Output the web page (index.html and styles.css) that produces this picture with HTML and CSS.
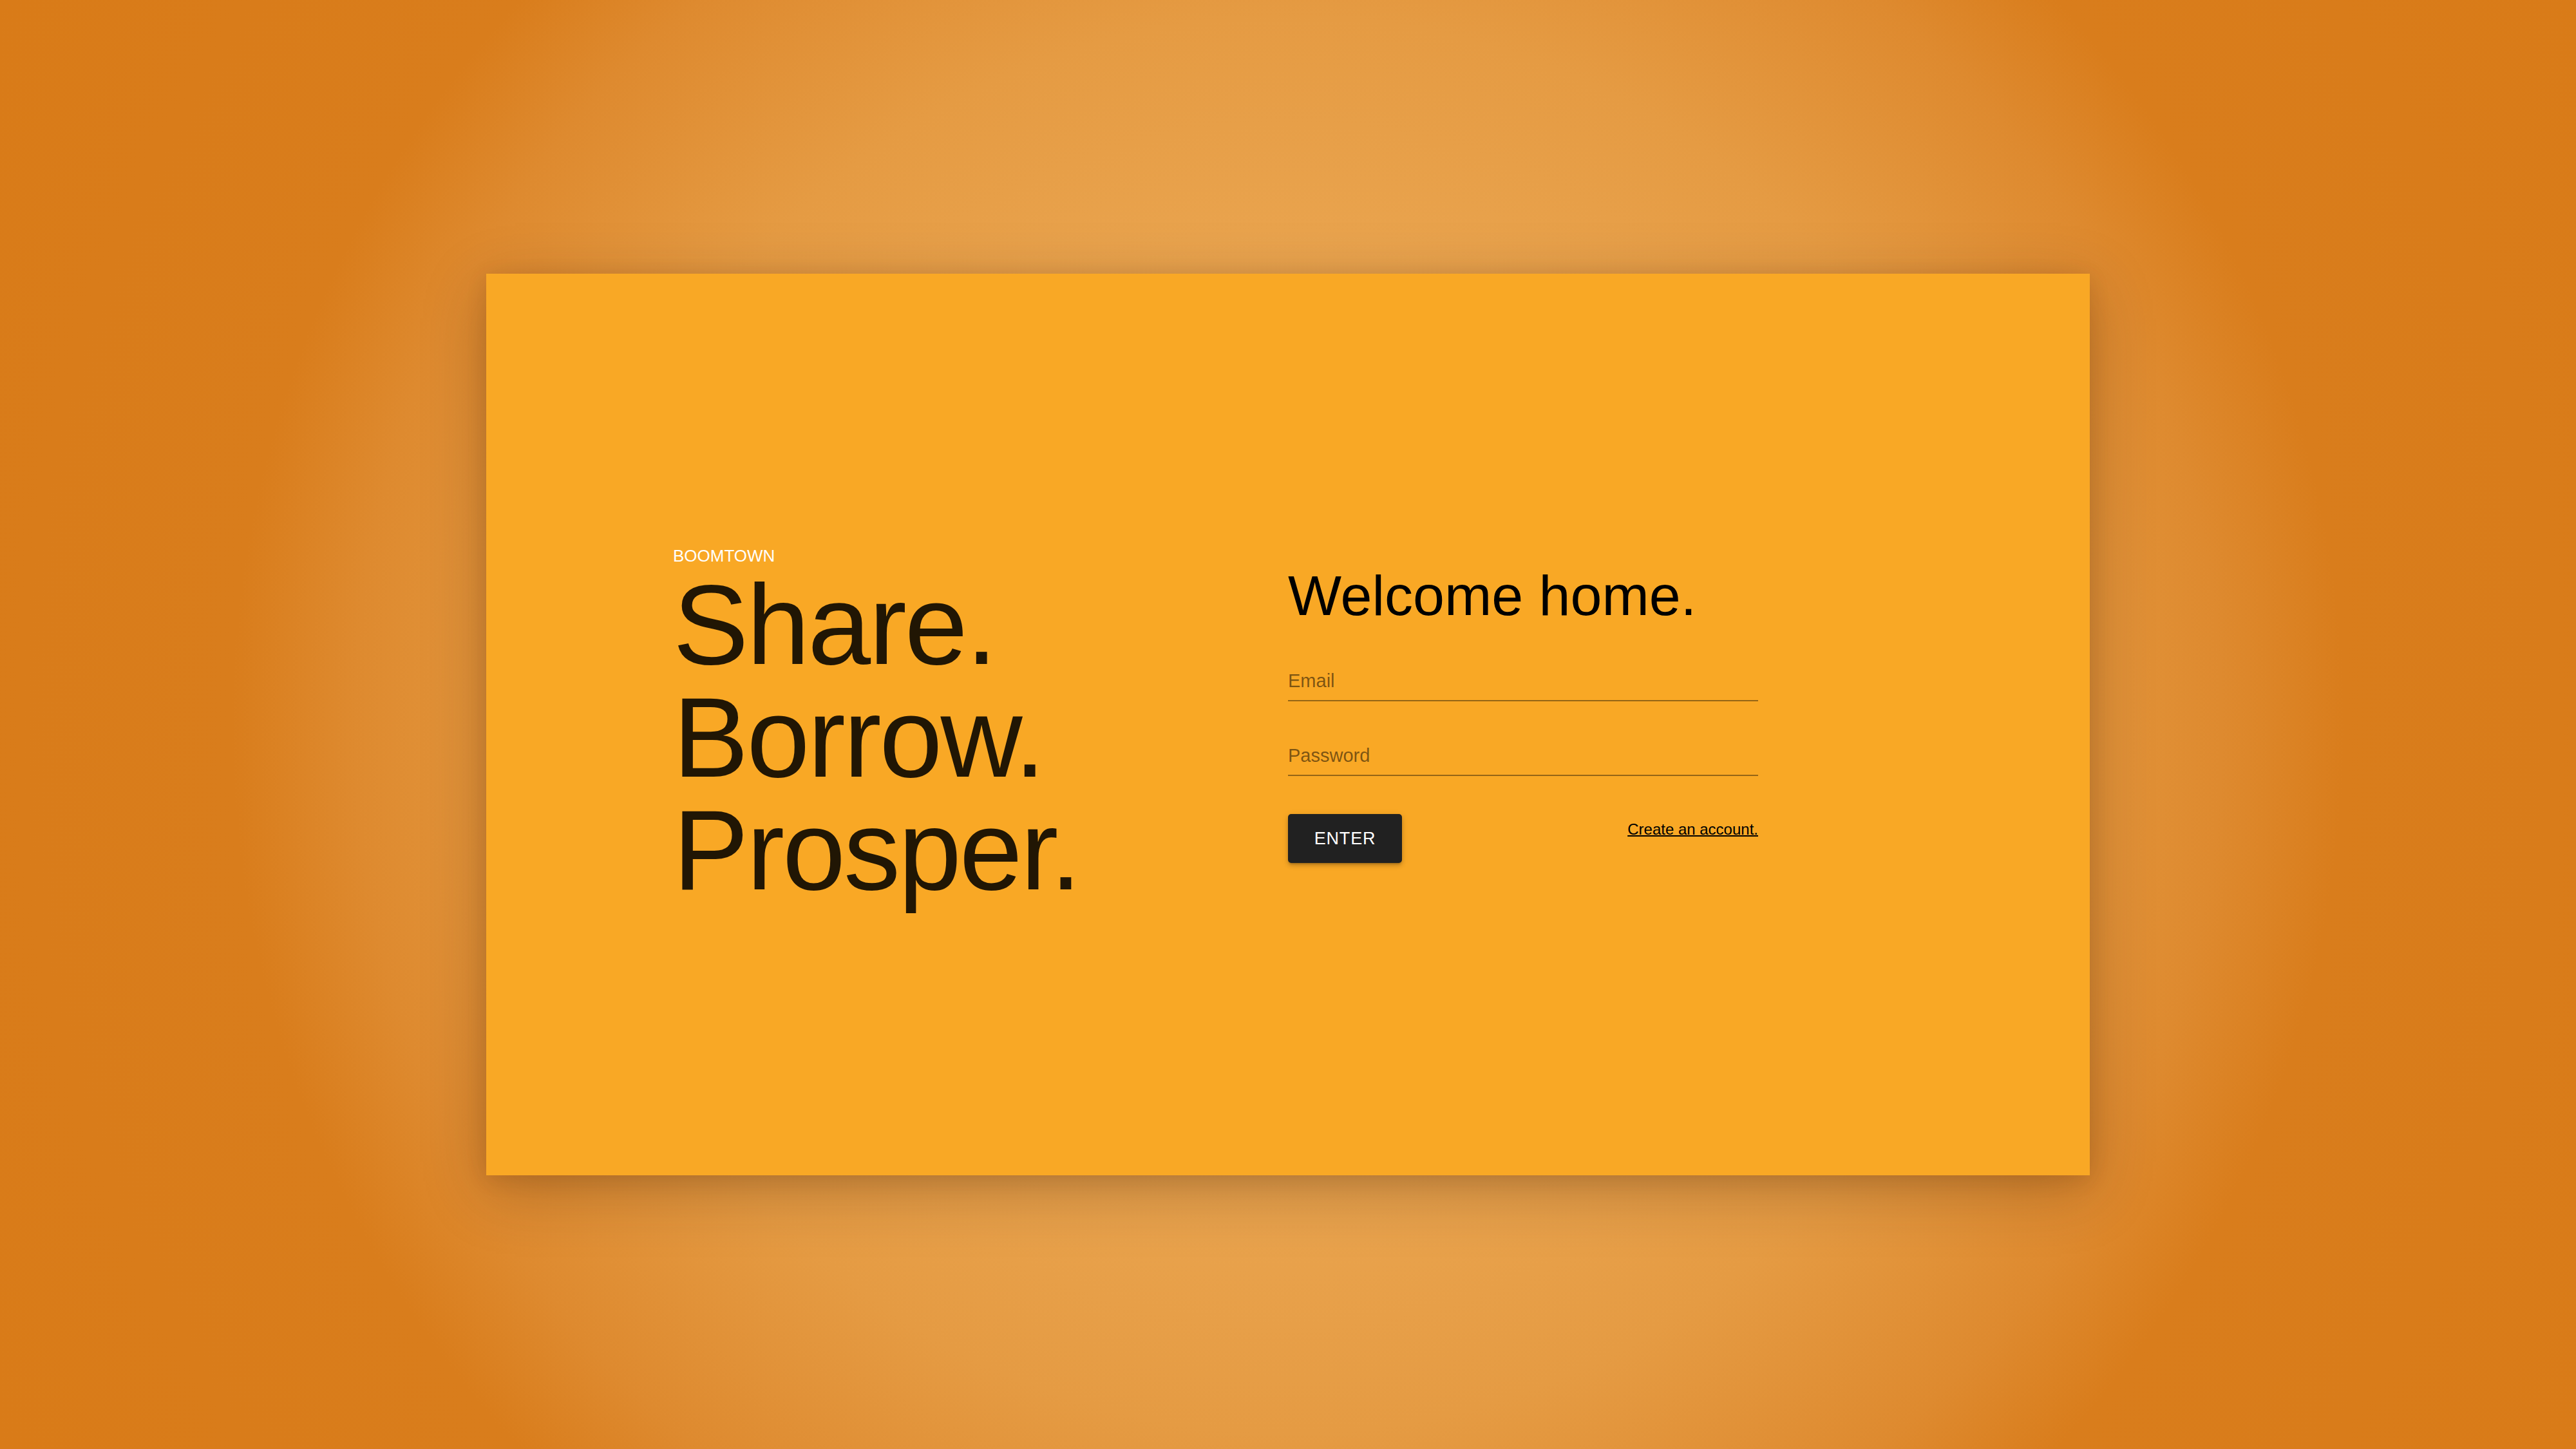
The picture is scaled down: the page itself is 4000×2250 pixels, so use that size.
FILE: index.html
```html
<!DOCTYPE html>
<html lang="en">
<head>
<meta charset="utf-8">
<title>Boomtown</title>
<link rel="stylesheet" href="styles.css">
</head>
<body>
<main class="stage">
  <section class="card">
    <div class="col col-left">
      <div class="brand">
        <p class="logo">BOOMTOWN</p>
        <h2 class="tagline">Share.<br>Borrow.<br>Prosper.</h2>
      </div>
    </div>
    <div class="col col-right">
      <form class="login">
        <h1 class="welcome">Welcome home.</h1>
        <div class="field field-first"><span class="label">Email</span></div>
        <div class="field field-second"><span class="label">Password</span></div>
        <div class="actions">
          <button type="button" class="enter">ENTER</button>
          <a class="create" href="#">Create an account.</a>
        </div>
      </form>
    </div>
  </section>
</main>
</body>
</html>
```
FILE: styles.css
```css
* { box-sizing: border-box; }

html, body {
  margin: 0;
  padding: 0;
  height: 100%;
}

body {
  font-family: "Liberation Sans", Arial, sans-serif;
  background: radial-gradient(circle at 50% 50%,
    #efae5a 0,
    #eba752 600px,
    #e59b43 1100px,
    #de8a2f 1450px,
    #d97d1c 1640px,
    #d97b18 100%);
}

.stage {
  width: 100%;
  height: 100%;
  display: flex;
  align-items: center;
  justify-content: center;
}

.card {
  width: 2490px;
  height: 1400px;
  background: #f9a825;
  display: grid;
  grid-template-columns: 1fr 1fr;
  box-shadow: 0 24px 90px rgba(60, 25, 0, 0.28), 0 6px 30px rgba(60, 25, 0, 0.12);
}

.col {
  display: flex;
  align-items: center;
}

.col-left {
  justify-content: flex-start;
  padding-left: 290px;
}

.col-right { justify-content: flex-start; }

.brand { margin-top: 6px; }

.logo {
  margin: 0;
  color: #ffffff;
  font-size: 26px;
  line-height: 30px;
}

.tagline {
  margin: 5px 0 0;
  font-weight: 400;
  font-size: 176px;
  line-height: 175px;
  letter-spacing: -3px;
  color: rgba(0, 0, 0, 0.87);
}

.login {
  width: 730px;
  margin-bottom: 36px;
}

.welcome {
  margin: 0;
  font-weight: 400;
  font-size: 88px;
  line-height: 101px;
  color: #000;
}

.field {
  border-bottom: 2px solid rgba(0, 0, 0, 0.4);
  padding-bottom: 13px;
}

.field-first { margin-top: 66px; }
.field-second { margin-top: 68px; }

.label {
  display: block;
  font-size: 29px;
  line-height: 33px;
  color: rgba(0, 0, 0, 0.5);
}

.actions {
  margin-top: 59px;
  display: flex;
  justify-content: space-between;
  align-items: flex-start;
}

.enter {
  width: 177px;
  height: 76px;
  border: 0;
  border-radius: 5px;
  background: #212121;
  color: #ffffff;
  font-family: "Liberation Sans", Arial, sans-serif;
  font-size: 27px;
  letter-spacing: 0.8px;
  padding: 0;
  box-shadow: 0 3px 3px -2px rgba(0, 0, 0, 0.25), 0 4px 6px rgba(0, 0, 0, 0.16), 0 2px 12px rgba(0, 0, 0, 0.1);
}

.create {
  margin-top: 10px;
  font-size: 24px;
  line-height: 28px;
  color: #000;
  text-decoration: underline;
  text-decoration-thickness: 2px;
}
```
